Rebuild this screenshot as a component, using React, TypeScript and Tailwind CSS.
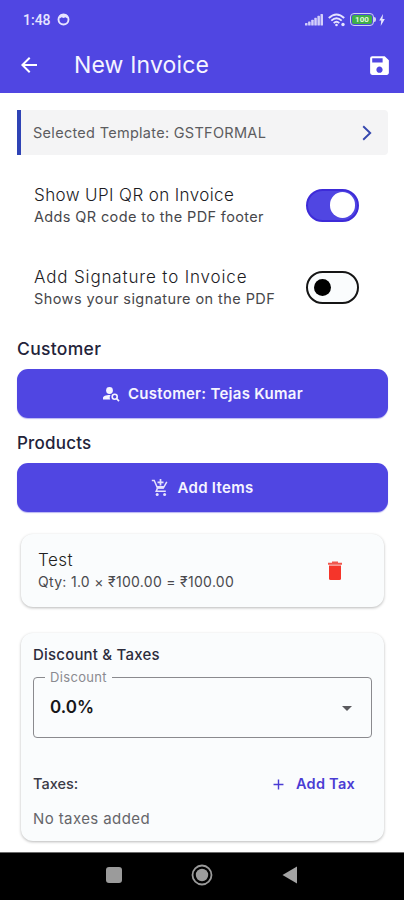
import type { ReactNode } from "react";
import { MdAdd, MdArrowBack, MdArrowDropDown, MdSave } from "react-icons/md";

function StatusBar() {
  return (
    <div className="flex h-[39px] items-center pl-[23px] pr-[19px] text-[#e6e4ff]">
      <span className="font-['Roboto'] text-[14px] leading-none font-medium">1:48</span>
      <svg className="ml-[6px]" width="13" height="13" viewBox="0 0 13 13" fill="none">
        <circle cx="6.5" cy="6.5" r="5" stroke="currentColor" strokeWidth="1.9" />
        <path d="M1.500 5 3.500 1.500h6l2 3.500-1.600.3-1.400-1-2 .8-2-.8-1.400 1z" fill="currentColor" />
      </svg>
      <div className="ml-auto flex items-center">
        <svg width="18" height="13" viewBox="0 0 18 13" fill="#d3cffb">
          <rect x="0" y="10" width="2.5" height="2.5" rx=".6" />
          <rect x="3.1" y="8.5" width="2.5" height="4" rx=".6" />
          <rect x="6.2" y="6.7" width="2.5" height="5.8" rx=".6" />
          <rect x="9.3" y="4.8" width="2.5" height="7.7" rx=".6" />
          <rect x="12.4" y="2.8" width="2.5" height="9.7" rx=".6" />
          <rect x="15.5" y="1" width="2.5" height="11.5" rx=".6" />
        </svg>
        <svg className="ml-[5px]" width="18" height="14" viewBox="0 0 18 14" fill="none" stroke="currentColor" strokeWidth="1.900">
          <path d="M.8 5Q8.500-2.200 16.200 5" />
          <path d="M3.300 7.600Q8.500 2.800 13.700 7.600" />
          <path d="M5.700 10.100Q8.500 7.600 11.300 10.100" />
          <circle cx="8.500" cy="12" r="1.300" fill="currentColor" stroke="none" />
          <circle cx="15" cy="11.500" r="1.700" fill="currentColor" stroke="none" />
        </svg>
        <div className="ml-1 flex h-[13px] w-6 items-center rounded-[4px] border-[1.500px] border-[#cfd3ee] p-px">
          <div className="flex h-full w-full items-center justify-center rounded-[2px] bg-[#3fae49] font-['Roboto'] text-[8px] leading-none font-bold text-[#e4f7dc]">
            100
          </div>
        </div>
        <div className="h-[5px] w-[2px] rounded-r bg-[#cfd3ee]" />
        <svg className="ml-[3px]" width="6" height="12" viewBox="0 0 6 12" fill="currentColor">
          <path d="M4 0 .2 6.600h2L1.700 12 5.800 5H3.500z" />
        </svg>
      </div>
    </div>
  );
}

function SwitchRow({ title, subtitle, on }: { title: ReactNode; subtitle: ReactNode; on: boolean }) {
  return (
    <div className="flex h-[82.500px] items-center justify-between pl-[18px] pr-[29px]">
      <div className="whitespace-nowrap">
        <div className="h-[23px] text-[17px] leading-[25px] font-light text-[#1c1c1f]">{title}</div>
        <div className="h-[22px] text-[14.5px] leading-[22px] text-[#47474b]">{subtitle}</div>
      </div>
      {on ? (
        <div className="flex h-[33px] w-[53px] items-center justify-end rounded-full border-2 border-[#3d2bd8] bg-[#5046e2] pr-[2px]">
          <div className="h-[26px] w-[25px] rounded-full bg-white" />
        </div>
      ) : (
        <div className="flex h-[33px] w-[53px] items-center rounded-full border-2 border-[#151515] bg-[#fafcfd] pl-[6px]">
          <div className="h-[17px] w-[17px] rounded-full bg-black" />
        </div>
      )}
    </div>
  );
}

function PrimaryButton({ icon, children }: { icon: ReactNode; children: ReactNode }) {
  return (
    <button className="flex h-[49px] w-full items-center justify-center gap-[8px] rounded-[11px] bg-[#5046e2] pt-px text-[15px] font-semibold whitespace-nowrap text-[#f5f4ff] shadow-[0_1px_1px_rgba(80,70,226,0.4)]">
      {icon}
      {children}
    </button>
  );
}

function PersonSearchIcon() {
  return (
    <svg width="18" height="18" viewBox="0 0 18 18" fill="currentColor">
      <circle cx="7.500" cy="5.500" r="3.400" />
      <path d="M1 14.500v-1.600C1 11 4.300 9.800 8.600 10c-1 1.300-1.200 3-.4 4.500z" />
      <circle cx="12.700" cy="11.700" r="2.500" fill="none" stroke="currentColor" strokeWidth="1.600" />
      <path d="m14.500 13.500 2.500 2.600" stroke="currentColor" strokeWidth="1.700" />
    </svg>
  );
}

function CartIcon() {
  return (
    <svg width="18" height="18" viewBox="0 0 18 18" fill="none" stroke="#e4e1fc" strokeWidth="1.500">
      <path d="M.8 1.500h2.400l3.300 7.600h5.800l3.500-6.300" />
      <path d="M6.500 9.100 5.200 12.200h9.600" />
      <path d="M9.500 0v6.500M6.500 3.300h6" strokeWidth="1.700" />
      <path d="M5.500 7h8l-1.300 2.500H6.500z" fill="#e4e1fc" stroke="none" />
      <circle cx="6.200" cy="15.600" r="1.500" fill="#e4e1fc" stroke="none" />
      <circle cx="13.600" cy="15.600" r="1.500" fill="#e4e1fc" stroke="none" />
    </svg>
  );
}

function TrashIcon() {
  return (
    <svg width="14" height="20" viewBox="0 0 14 20">
      <path d="M4 .5h6v1.200h4v2H0v-2h4z" fill="#f0574e" />
      <path d="M1 4.500h12v13a1.500 1.500 0 0 1-1.500 1.500h-9A1.500 1.500 0 0 1 1 17.500z" fill="#f5352a" />
    </svg>
  );
}

const card = "ml-[5px] mr-1 rounded-[12px] bg-[#fafcfd] shadow-[0_1px_3px_rgba(0,0,0,0.28)]";

export default function App() {
  return (
    <div className="flex h-[900px] w-[404px] flex-col overflow-hidden bg-white font-['Inter','Noto_Sans',sans-serif]">
      <header className="h-[93px] shrink-0 bg-[#5046e2]">
        <StatusBar />
        <div className="flex h-[52px] items-center pl-[17px] pr-[12px] text-white">
          <MdArrowBack className="size-[24px]" />
          <h1 className="ml-[33px] pt-px text-[23px] leading-none font-normal tracking-[0.150px] text-[#f5f4ff]">New Invoice</h1>
          <MdSave className="ml-auto size-[25px]" />
        </div>
      </header>

      <main className="flex flex-1 flex-col px-4 pt-[17px]">
        <div className="ml-px flex h-[45px] w-[371px] shrink-0 items-center justify-between rounded-r-[4px] border-l-4 border-[#2f43b5] bg-[#f4f4f5] pl-[12px] pr-[16px]">
          <span className="text-[14.5px] tracking-[0.290px] whitespace-nowrap text-[#5c5c60]">Selected Template: GSTFORMAL</span>
          <svg width="10" height="16" viewBox="0 0 10 16" fill="none" stroke="#3547ae" strokeWidth="1.900">
            <path d="M1.200 1.300 8.200 8l-7 6.700" />
          </svg>
        </div>

        <div className="mt-[9px] shrink-0">
          <SwitchRow
            on
            title={<span className="tracking-[0.390px]">Show UPI QR on Invoice</span>}
            subtitle={<span className="tracking-[0.370px]">Adds QR code to the PDF footer</span>}
          />
          <SwitchRow
            on={false}
            title={<span className="tracking-[0.850px]">Add Signature to Invoice</span>}
            subtitle={<span className="tracking-[0.430px]">Shows your signature on the PDF</span>}
          />
        </div>

        <div className="mx-px mt-[9px] w-[371px] shrink-0">
          <h2 className="h-[31px] text-[17.5px] leading-[22px] font-medium tracking-[0.320px] text-[#23233a]">Customer</h2>
          <PrimaryButton icon={<PersonSearchIcon />}>
            <span className="tracking-[0.280px]">Customer: Tejas Kumar</span>
          </PrimaryButton>
          <h2 className="mt-[13px] h-[32px] text-[17px] leading-[24px] font-medium tracking-[0.200px] text-[#23233a]">Products</h2>
          <PrimaryButton icon={<CartIcon />}>
            <span className="tracking-[0.300px]">Add Items</span>
          </PrimaryButton>
        </div>

        <div className={`${card} mt-[22px] flex h-[73px] shrink-0 items-center justify-between pl-[17px] pr-[42px]`}>
          <div className="whitespace-nowrap">
            <div className="h-[22px] text-[17px] leading-[22px] font-light tracking-[0.500px] text-[#1f1f22]">Test</div>
            <div className="h-[22px] text-[14px] leading-[22px] tracking-[0.300px] text-[#4a4a4e]">Qty: 1.0 × ₹100.00 = ₹100.00</div>
          </div>
          <TrashIcon />
        </div>

        <section className={`${card} mt-[26px] h-[208px] shrink-0 px-3 pt-[11px]`}>
          <h3 className="text-[15px] leading-[22px] font-medium tracking-[0.200px] text-[#2c2c3c]">Discount &amp; Taxes</h3>
          <fieldset className="mt-px h-[71px] w-[339px] rounded-[4px] border-[1.500px] border-[#8a8a8e] pr-[12px] pl-4">
            <legend className="-ml-[5px] px-[5px] text-[13px] leading-[20px] tracking-[0.340px] text-[#8a8a90]">Discount</legend>
            <div className="flex h-[41px] items-center justify-between">
              <span className="pt-px text-[17px] font-semibold text-[#161618]">0.0%</span>
              <MdArrowDropDown className="size-6 text-[#5a5a5e]" />
            </div>
          </fieldset>
          <div className="mt-[34px] flex h-6 items-center justify-between pr-[17px] text-[14.5px]">
            <span className="font-medium text-[#3a3a46]">Taxes:</span>
            <button className="flex items-center gap-[9px] font-semibold tracking-[0.260px] text-[#4a3cd4]">
              <MdAdd className="size-[17px]" />
              Add Tax
            </button>
          </div>
          <p className="mt-3 text-[15px] leading-[22px] tracking-[0.400px] text-[#66666a]">No taxes added</p>
        </section>
      </main>

      <nav className="grid h-[48px] shrink-0 grid-cols-[88px_88px_88px] items-center justify-center justify-items-center border-t border-[#6b6b6b] bg-black pb-[3px]">
        <div className="size-4 rounded-[3px] bg-[#9b9b9b]" />
        <svg width="22" height="22" viewBox="0 0 22 22">
          <circle cx="11" cy="11" r="9.500" fill="none" stroke="#9b9b9b" strokeWidth="1.800" />
          <circle cx="11" cy="11" r="6.200" fill="#9b9b9b" />
        </svg>
        <svg width="16" height="18" viewBox="0 0 16 18" fill="#a3a3a3">
          <path d="M15 .5v17L.5 9z" />
        </svg>
      </nav>
    </div>
  );
}
